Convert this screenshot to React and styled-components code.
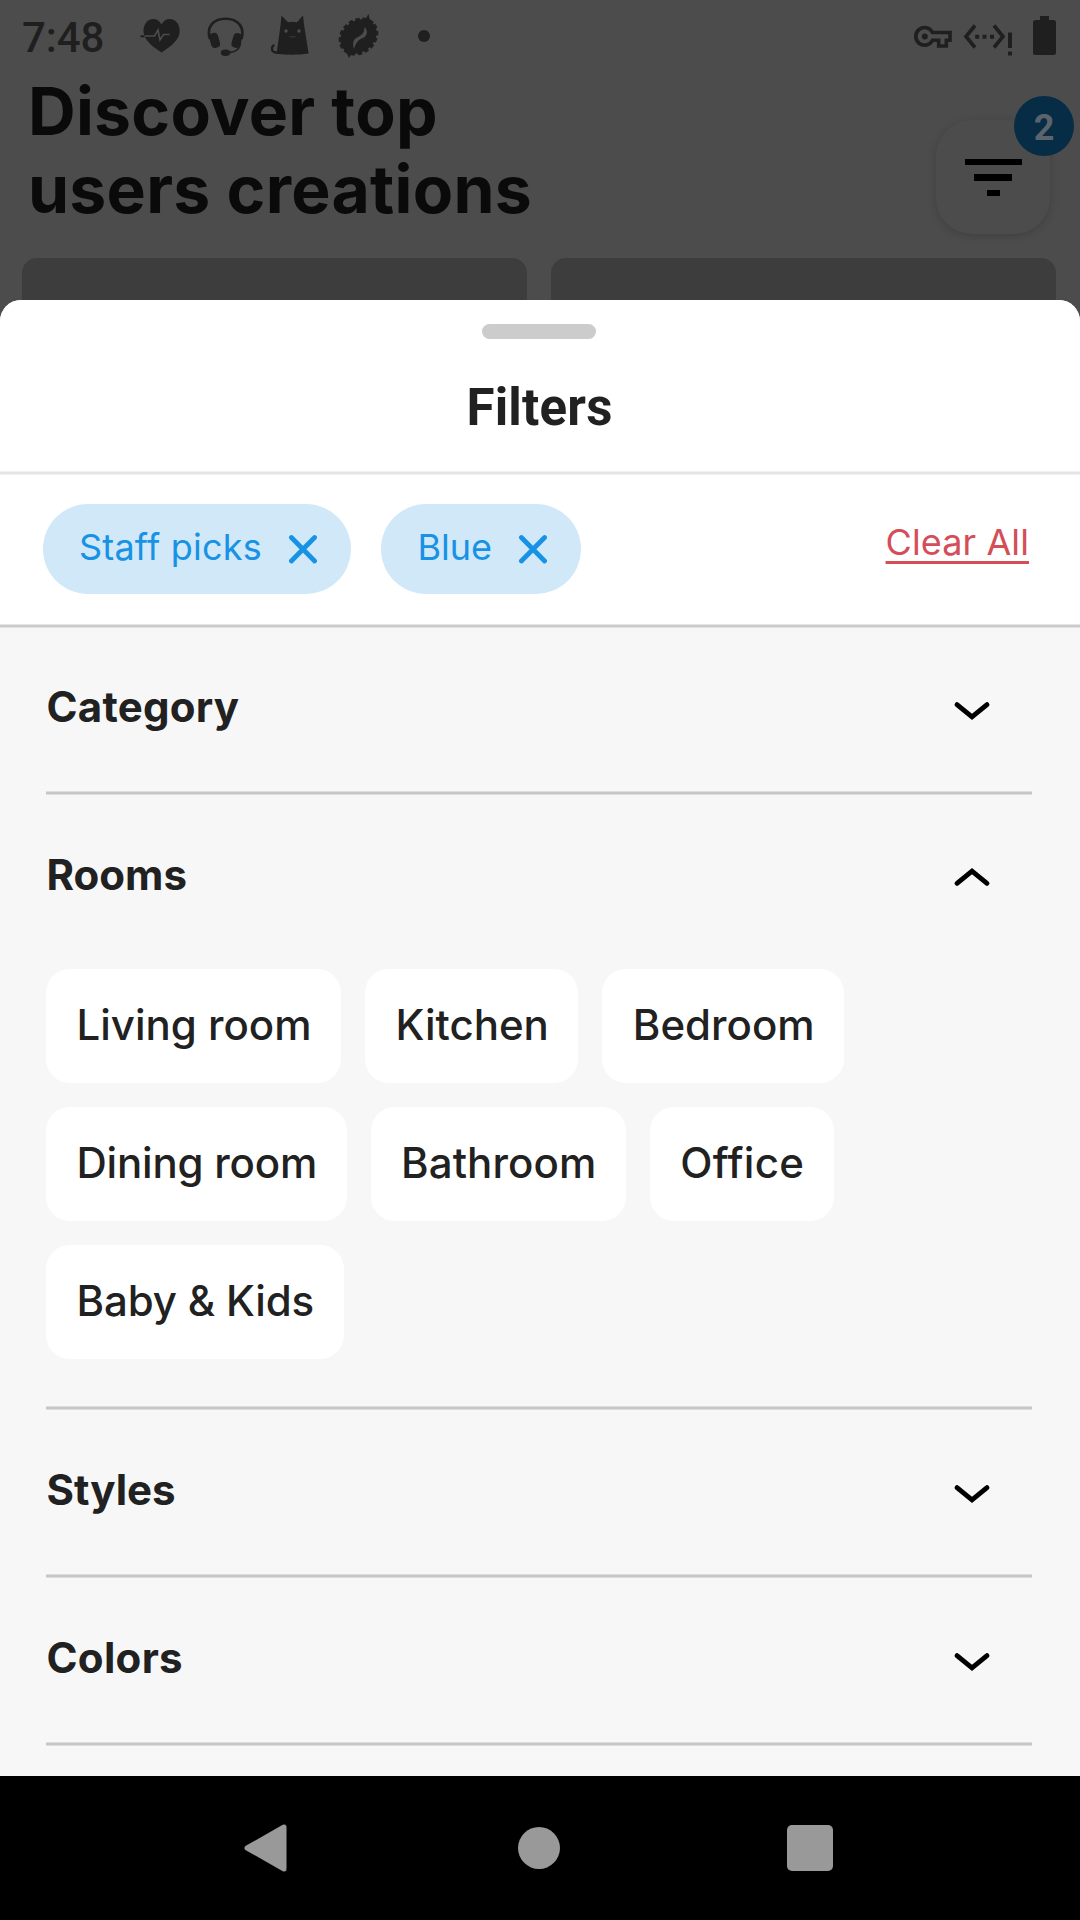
import React, { useState } from "react";
import styled, { createGlobalStyle } from "styled-components";

const GlobalStyle = createGlobalStyle`
  *, *::before, *::after { box-sizing: border-box; }
  body { margin: 0; background: #4c4c4c; }
  button { margin: 0; padding: 0; border: 0; background: none; font: inherit; color: inherit; }
  h1, h2, h3 { margin: 0; }
  svg { display: block; flex: none; }
`;

const INTER = `Inter, "Liberation Sans", sans-serif`;
const ROBOTO = `Roboto, "Liberation Sans", sans-serif`;

const Screen = styled.div`
  width: 1080px;
  height: 1920px;
  display: flex;
  flex-direction: column;
  overflow: hidden;
  background: #4c4c4c;
  font-family: ${INTER};
  color: #212121;
`;

const StatusBar = styled.div`
  height: 72px;
  flex: none;
  display: flex;
  align-items: center;
  justify-content: space-between;
  padding: 0 24px 0 22px;
  color: #1f1f1f;
`;

const StatusGroup = styled.div`
  display: flex;
  align-items: center;
`;

const Clock = styled.span`
  width: 84px;
  margin-right: 34px;
  padding-top: 3px;
  font: 500 42px/48px ${ROBOTO};
  letter-spacing: -0.1px;
  white-space: nowrap;
`;

const Header = styled.header`
  height: 186px;
  flex: none;
  display: flex;
  justify-content: space-between;
  align-items: flex-start;
  padding: 0 30px 0 28px;
`;

const Title = styled.h1`
  font: 700 66px/78px ${INTER};
  letter-spacing: 0.28px;
  color: #0a0a0a;
`;

const FilterButton = styled.button`
  position: relative;
  width: 114px;
  height: 114px;
  margin-top: 48px;
  display: flex;
  flex-direction: column;
  align-items: center;
  padding-top: 38.500px;
  gap: 9px;
  border-radius: 36px;
  background: #4c4c4c;
  box-shadow: 0 2px 9px rgba(0, 0, 0, 0.16);
`;

const FilterBar = styled.span`
  width: ${(p) => p.$width}px;
  height: 6.600px;
  background: #000;
`;

const Badge = styled.span`
  position: absolute;
  top: -24px;
  right: -24px;
  width: 60px;
  height: 60px;
  border-radius: 50%;
  background: #072c45;
  color: #5b646a;
  font: 700 36px/65px ${ROBOTO};
  text-align: center;
`;

const CardRow = styled.div`
  flex: none;
  height: 42px;
  display: grid;
  grid-template-columns: 1fr 1fr;
  gap: 24px;
  padding: 0 24px 0 22px;
`;

const Card = styled.div`
  border-radius: 15px 15px 0 0;
  background: #3d3d3d;
`;

const Sheet = styled.section`
  flex: 1;
  min-height: 0;
  display: flex;
  flex-direction: column;
  border-radius: 21px 21px 0 0;
  overflow: hidden;
  background: #f7f7f7;
`;

const SheetHeader = styled.div`
  height: 175px;
  flex: none;
  display: flex;
  flex-direction: column;
  align-items: center;
  padding: 24px 2px 0 0;
  background: #fff;
  border-bottom: 1px solid #f1f1f1;
  box-shadow: inset 0 -2px 0 #e5e5e5, inset 0 -3px 0 #f1f1f1;
`;

const Handle = styled.div`
  width: 114px;
  height: 15px;
  border-radius: 8px;
  background: #ccc;
`;

const SheetTitle = styled.h2`
  margin-top: 39px;
  padding-left: 1px;
  font: 700 51px/60px ${ROBOTO};
  letter-spacing: 0.2px;
`;

const ActiveFilters = styled.div`
  height: 153px;
  flex: none;
  display: flex;
  align-items: flex-start;
  gap: 30px;
  padding: 29px 51px 0 43px;
  background: #fff;
  border-bottom: 1px solid #e1e1e1;
  box-shadow: inset 0 -2px 0 #cbcbcb, inset 0 -3px 0 #e5e5e5;
`;

const ActiveChip = styled.button`
  height: 90px;
  display: flex;
  align-items: center;
  gap: 26.500px;
  padding: 0 33px 5px 36px;
  border-radius: 45px;
  background: #d0e8f8;
  color: #1792e5;
  font: 400 36px/44px ${INTER};
  letter-spacing: ${(p) => p.$tracking || 0}px;

  svg { margin-top: 4px; }
`;

const ClearAll = styled.button`
  margin: 16px 0 0 auto;
  font: 400 36px/44px ${INTER};
  letter-spacing: 0.1px;
  color: #d54d57;
  text-decoration: underline;
  text-decoration-thickness: 3px;
  text-underline-offset: 6px;
  text-decoration-skip-ink: none;
`;

const Sections = styled.div`
  flex: 1;
  padding: 0 48px 0 46px;
`;

const SectionHead = styled.button`
  width: 100%;
  height: 167px;
  display: flex;
  align-items: center;
  justify-content: space-between;
  padding: 0 40px 8px 0.500px;

  svg { margin-top: ${(p) => (p.$open ? 4 : 8)}px; }
`;

const Section = styled.div`
  border-bottom: 1px solid #dedede;
  box-shadow: inset 0 -2px 0 #c6c6c6, inset 0 -3px 0 #dedede;

  &:first-child ${SectionHead} { height: 166px; }
`;

const SectionTitle = styled.h3`
  font: 700 42px/50px ${INTER};
  letter-spacing: ${(p) => p.$tracking || 0}px;
`;

const OptionList = styled.div`
  display: flex;
  flex-wrap: wrap;
  gap: 24px;
  padding: 7px 100px 50px 0;
`;

const Option = styled.button`
  height: 114px;
  padding: 0 29.500px 3px 30.500px;
  border-radius: 24px;
  background: #fff;
  font: 500 42px/50px ${INTER};
  letter-spacing: ${(p) => p.$tracking || 0}px;
`;

const NavBar = styled.nav`
  height: 144px;
  flex: none;
  display: flex;
  align-items: center;
  justify-content: space-between;
  padding: 0 247px 0 244px;
  background: #000;
`;

const HomeIcon = styled.svg`
  margin-left: 4px;
`;

const HeartIcon = () => (
  <svg width="40" height="44" viewBox="140 14 40 44">
    <path
      d="M161.500 52.500C153 47 143.500 40 143.500 31c0-7 4-12 9.500-12 4 0 7 2 8.500 5.500C163 21 166 19 170 19c5.500 0 9.700 5 9.700 12 0 9-9.700 16-18.200 21.500z"
      fill="currentColor"
    />
    <path d="M144 36h10.500l3.500-6 2 10 3.500-5.500h6" fill="none" stroke="#4c4c4c" strokeWidth="1.600" />
    <path d="M140.500 36.300h4" stroke="currentColor" strokeWidth="2" />
  </svg>
);

const HeadsetIcon = () => (
  <svg width="38" height="44" viewBox="207 14 38 44">
    <path d="M210 39C206 27 213 18.700 225.500 18.700S245 27 241.500 39" fill="none" stroke="currentColor" strokeWidth="2.600" />
    <rect x="210" y="33" width="9" height="15" rx="4" transform="rotate(-16 214 40)" fill="currentColor" />
    <rect x="232.500" y="33" width="9" height="15" rx="4" transform="rotate(16 237 40)" fill="currentColor" />
    <path d="M240.500 43c-.5 5-4 9-11 9.500" fill="none" stroke="currentColor" strokeWidth="1.800" />
    <ellipse cx="225.500" cy="52.700" rx="4.700" ry="3.200" fill="currentColor" />
  </svg>
);

const CatIcon = () => (
  <svg width="39" height="44" viewBox="270 14 39 44">
    <path
      d="M281.500 15.500l6.500 6.800c3-.9 6-.9 9 0l6-6.800 1 9 4.600 29c-10 1.500-22 1.500-32 .3l4-29z"
      fill="currentColor"
    />
    <path d="M279 52.800c-5 .2-7.300-1.300-7-4.500 0-1.300.5-2 1.500-2.700" fill="none" stroke="currentColor" strokeWidth="2.400" strokeLinecap="round" />
    <circle cx="286" cy="31" r="1.700" fill="#4c4c4c" />
    <circle cx="299" cy="31" r="1.700" fill="#4c4c4c" />
    <path d="M289.500 36.800h6" stroke="#3c3c3c" strokeWidth="1" />
  </svg>
);

const GearIcon = () => (
  <svg width="43" height="44" viewBox="337 14 43 44">
    <ellipse cx="358.500" cy="36.500" rx="19.500" ry="15.500" transform="rotate(-38 358.500 36.500)" fill="currentColor" />
    <ellipse
      cx="358.500"
      cy="36.500"
      rx="19.500"
      ry="16"
      transform="rotate(-38 358.500 36.500)"
      fill="none"
      stroke="currentColor"
      strokeWidth="3.200"
      strokeDasharray="4.400 2.600"
    />
    <path d="M361 27l7.500-13 3 12zM356 46l-7 12-5-11z" fill="currentColor" />
    <path d="M364.500 27c4 4 3 9.500-2.500 11.500-4 1-6 4.500-8 10.500-1.500-5-1-8.500 2-11 5-2 8.500-4.500 8.500-11z" fill="#4c4c4c" />
  </svg>
);

const DotIcon = () => (
  <svg width="12" height="12" viewBox="0 0 12 12">
    <circle cx="6" cy="6" r="6" fill="currentColor" />
  </svg>
);

const KeyIcon = () => (
  <svg width="39" height="44" viewBox="914 14 39 44">
    <path
      d="M932.500 32.500H950v7.700h-3.700v5.800H938.700v-5.800h-6.200a8.800 8.800 0 1 1 0-7.700z"
      fill="none"
      stroke="currentColor"
      strokeWidth="3.600"
    />
    <circle cx="924.800" cy="36.400" r="3" fill="currentColor" />
  </svg>
);

const EthernetIcon = () => (
  <svg width="50" height="44" viewBox="963 14 50 44">
    <path d="M975 25.500l-9 11 9 11M994 25.500l9 11-9 11" fill="none" stroke="currentColor" strokeWidth="3.600" />
    <path d="M975.200 34.700h4v4h-4zM982.500 34.700h4v4h-4zM990 34.700h4v4h-4zM1008 32.500h4v15.500h-4zM1008 51.500h4v4h-4z" fill="currentColor" />
  </svg>
);

const BatteryIcon = () => (
  <svg width="23" height="40" viewBox="0 0 23 40">
    <path d="M7 0h9v4h4.500Q23 4 23 6.500v30Q23 39 20.500 39h-18Q0 39 0 36.500v-30Q0 4 2.500 4H7z" fill="currentColor" />
  </svg>
);

const CloseIcon = () => (
  <svg width="30" height="30" viewBox="0 0 30 30">
    <path d="M3.400 3.500l23.200 23.500M26.600 3.500l-23.200 23.500" fill="none" stroke="currentColor" strokeWidth="4.700" strokeLinecap="round" />
  </svg>
);

const Chevron = ({ open }) => (
  <svg width="40" height="22" viewBox="0 0 40 22">
    <path
      d={open ? "M5 17.300l15-12.200 15 12.200" : "M5 4.700l15 12.200 15-12.200"}
      fill="none"
      stroke="#000"
      strokeWidth="4.900"
      strokeLinecap="round"
    />
  </svg>
);

const Gap = styled.span`
  width: ${(p) => p.$w}px;
`;

const ACTIVE = [
  { label: "Staff picks", tracking: 0.2 },
  { label: "Blue" },
];

const SECTIONS = [
  { name: "Category", tracking: 0.25 },
  {
    name: "Rooms",
    options: [
      { label: "Living room" },
      { label: "Kitchen" },
      { label: "Bedroom" },
      { label: "Dining room", tracking: -0.2 },
      { label: "Bathroom", tracking: 0.1 },
      { label: "Office", tracking: 0.3 },
      { label: "Baby & Kids", tracking: -0.15 },
    ],
  },
  { name: "Styles" },
  { name: "Colors", tracking: 0.3 },
];

export default function App() {
  const [open, setOpen] = useState("Rooms");
  const [active, setActive] = useState(ACTIVE);

  return (
    <Screen>
      <GlobalStyle />
      <StatusBar>
        <StatusGroup>
          <Clock>7:48</Clock>
          <HeartIcon />
          <Gap $w={27} />
          <HeadsetIcon />
          <Gap $w={25} />
          <CatIcon />
          <Gap $w={28} />
          <GearIcon />
          <Gap $w={38} />
          <DotIcon />
        </StatusGroup>
        <StatusGroup>
          <KeyIcon />
          <Gap $w={10} />
          <EthernetIcon />
          <Gap $w={20} />
          <BatteryIcon />
        </StatusGroup>
      </StatusBar>

      <Header>
        <Title>
          Discover top
          <br />
          users creations
        </Title>
        <FilterButton aria-label="Filters">
          <FilterBar $width={57} />
          <FilterBar $width={38} />
          <FilterBar $width={13} />
          <Badge>2</Badge>
        </FilterButton>
      </Header>
      <CardRow>
        <Card />
        <Card />
      </CardRow>

      <Sheet>
        <SheetHeader>
          <Handle />
          <SheetTitle>Filters</SheetTitle>
        </SheetHeader>
        <ActiveFilters>
          {active.map(({ label, tracking }) => (
            <ActiveChip
              key={label}
              $tracking={tracking}
              onClick={() => setActive(active.filter((f) => f.label !== label))}
            >
              {label}
              <CloseIcon />
            </ActiveChip>
          ))}
          <ClearAll onClick={() => setActive([])}>Clear All</ClearAll>
        </ActiveFilters>
        <Sections>
          {SECTIONS.map(({ name, tracking, options }) => (
            <Section key={name}>
              <SectionHead $open={open === name} onClick={() => setOpen(open === name ? null : name)}>
                <SectionTitle $tracking={tracking}>{name}</SectionTitle>
                <Chevron open={open === name} />
              </SectionHead>
              {open === name && options && (
                <OptionList>
                  {options.map((o) => (
                    <Option key={o.label} $tracking={o.tracking}>
                      {o.label}
                    </Option>
                  ))}
                </OptionList>
              )}
            </Section>
          ))}
        </Sections>
      </Sheet>

      <NavBar>
        <svg width="43" height="48" viewBox="0 0 43 48">
          <path d="M3 24L40 3v42z" fill="#999" stroke="#999" strokeWidth="5" strokeLinejoin="round" />
        </svg>
        <HomeIcon width="42" height="42" viewBox="0 0 42 42">
          <circle cx="21" cy="21" r="21" fill="#999" />
        </HomeIcon>
        <svg width="46" height="46" viewBox="0 0 46 46">
          <rect width="46" height="46" rx="5" fill="#999" />
        </svg>
      </NavBar>
    </Screen>
  );
}
